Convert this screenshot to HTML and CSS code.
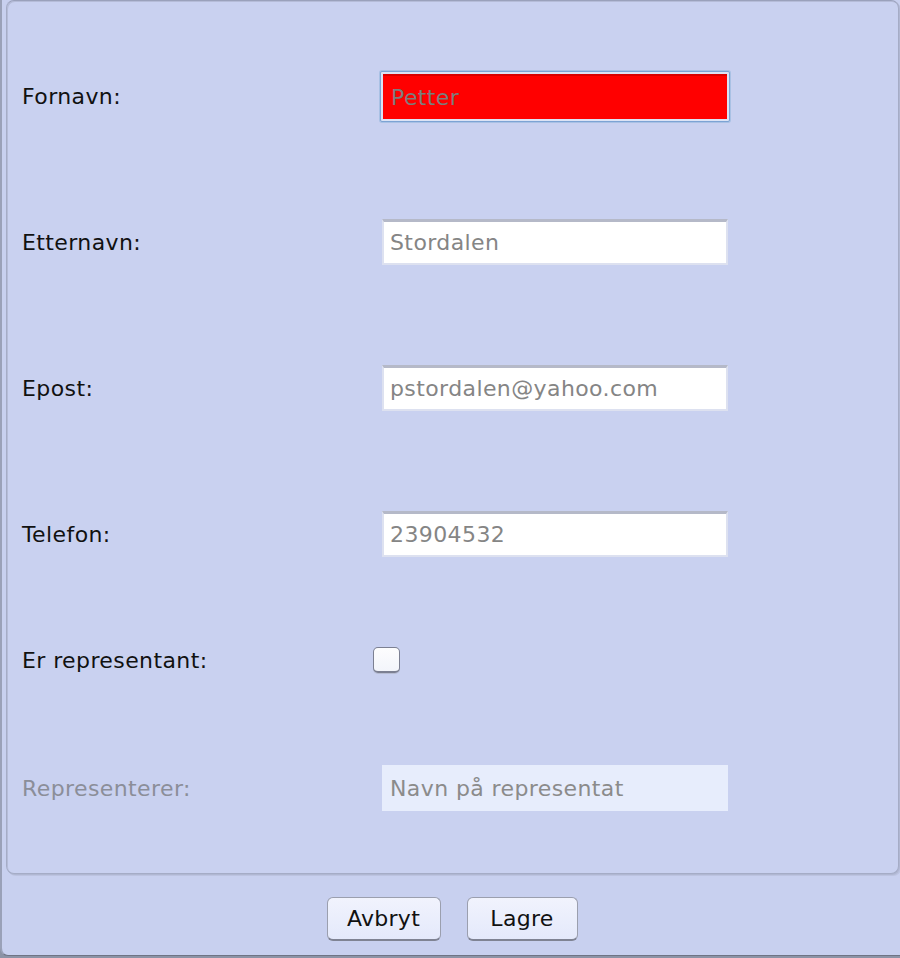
FILE: index.html
```html
<!DOCTYPE html>
<html>
<head>
<meta charset="utf-8">
<link rel="stylesheet" href="styles.css">
</head>
<body>
<div class="window">
  <div class="panel">
    <div class="form">
      <div class="row r1">
        <span class="label">Fornavn:</span>
        <div class="focus"><div class="field error">Petter</div></div>
      </div>
      <div class="row r2">
        <span class="label">Etternavn:</span>
        <div class="field">Stordalen</div>
      </div>
      <div class="row r3">
        <span class="label">Epost:</span>
        <div class="field">pstordalen@yahoo.com</div>
      </div>
      <div class="row r4">
        <span class="label">Telefon:</span>
        <div class="field">23904532</div>
      </div>
      <div class="row r5">
        <span class="label">Er representant:</span>
        <div class="checkbox"></div>
      </div>
      <div class="row r6">
        <span class="label disabled">Representerer:</span>
        <div class="field disabled-field">Navn på representat</div>
      </div>
    </div>
  </div>
  <div class="buttons">
    <div class="btn btn-cancel">Avbryt</div>
    <div class="btn btn-save">Lagre</div>
  </div>
</div>
</body>
</html>
```

FILE: styles.css
```css
html, body {
  margin: 0;
  padding: 0;
}
body {
  width: 900px;
  height: 958px;
  background: #8c93a6;
  font-family: "DejaVu Sans", "Liberation Sans", sans-serif;
  overflow: hidden;
}
.window {
  box-sizing: border-box;
  width: 900px;
  height: 956px;
  background: #c8d0ef;
  border-left: 2px solid #9aa1b8;
  border-bottom: 1px solid #6f7484;
  border-bottom-left-radius: 8px;
  display: flex;
  flex-direction: column;
}
.panel {
  box-sizing: border-box;
  margin-left: 4px;
  width: 893px;
  height: 874px;
  border: 1px solid #a5acc6;
  border-top-color: #9aa1bb;
  border-radius: 8px;
  box-shadow: inset 1px 1px 0 #b5bcd8, 1px 1px 0 #b0b7d2, 2px 2px 0 #bcc3e0;
  background: #c9d1f0;
}
.form {
  padding-left: 15px;
  padding-top: 22px;
  display: grid;
  grid-template-rows: 146px 146px 146px 146px 106px 150px;
}
.row {
  display: flex;
  align-items: center;
}
.label {
  width: 360px;
  font-size: 22px;
  color: #111;
  letter-spacing: 0.4px;
  padding-top: 1px;
}
.label.disabled {
  color: #8b8e99;
}
.field {
  box-sizing: border-box;
  width: 346px;
  height: 46px;
  background: #fff;
  border: 2px solid #dde1f0;
  border-top: 3px solid #b5b9c8;
  padding-left: 6px;
  font-size: 22px;
  letter-spacing: 0.4px;
  color: #858585;
  display: flex;
  align-items: center;
}
.focus {
  margin-left: -2px;
  padding: 2px;
  border: 1px solid #7ca3d4;
  background: #dbe3f5;
  box-shadow: 0 0 0 1px #a9c1e4;
  border-radius: 2px;
}
.field.error {
  width: 344px;
  height: 45px;
  background: #ff0000;
  border: none;
  border-top: 2px solid #d90000;
  color: #7d7d7d;
  padding-left: 8px;
}
.field.disabled-field {
  background: #e7edfc;
  border: none;
  padding-left: 8px;
  color: #8b8b8b;
}
.checkbox {
  box-sizing: border-box;
  margin-left: -9px;
  width: 27px;
  height: 26px;
  border: 1px solid #7c8092;
  border-bottom-width: 2px;
  border-radius: 5px;
  background: linear-gradient(#fdfdfe, #f3f5fb);
  box-shadow: 0 1px 0 #b7bdd3;
}
.buttons {
  display: flex;
  justify-content: center;
  gap: 26px;
  margin-top: 23px;
  padding-left: 2px;
}
.btn {
  box-sizing: border-box;
  height: 44px;
  border: 1px solid #9b9fae;
  border-bottom: 2px solid #7f8393;
  border-radius: 6px;
  background: linear-gradient(#f1f3fd, #e4e9fb);
  font-size: 22px;
  color: #111;
  display: flex;
  align-items: center;
  justify-content: center;
  letter-spacing: 0.3px;
}
.btn-cancel { width: 114px; }
.btn-save { width: 111px; }
```
